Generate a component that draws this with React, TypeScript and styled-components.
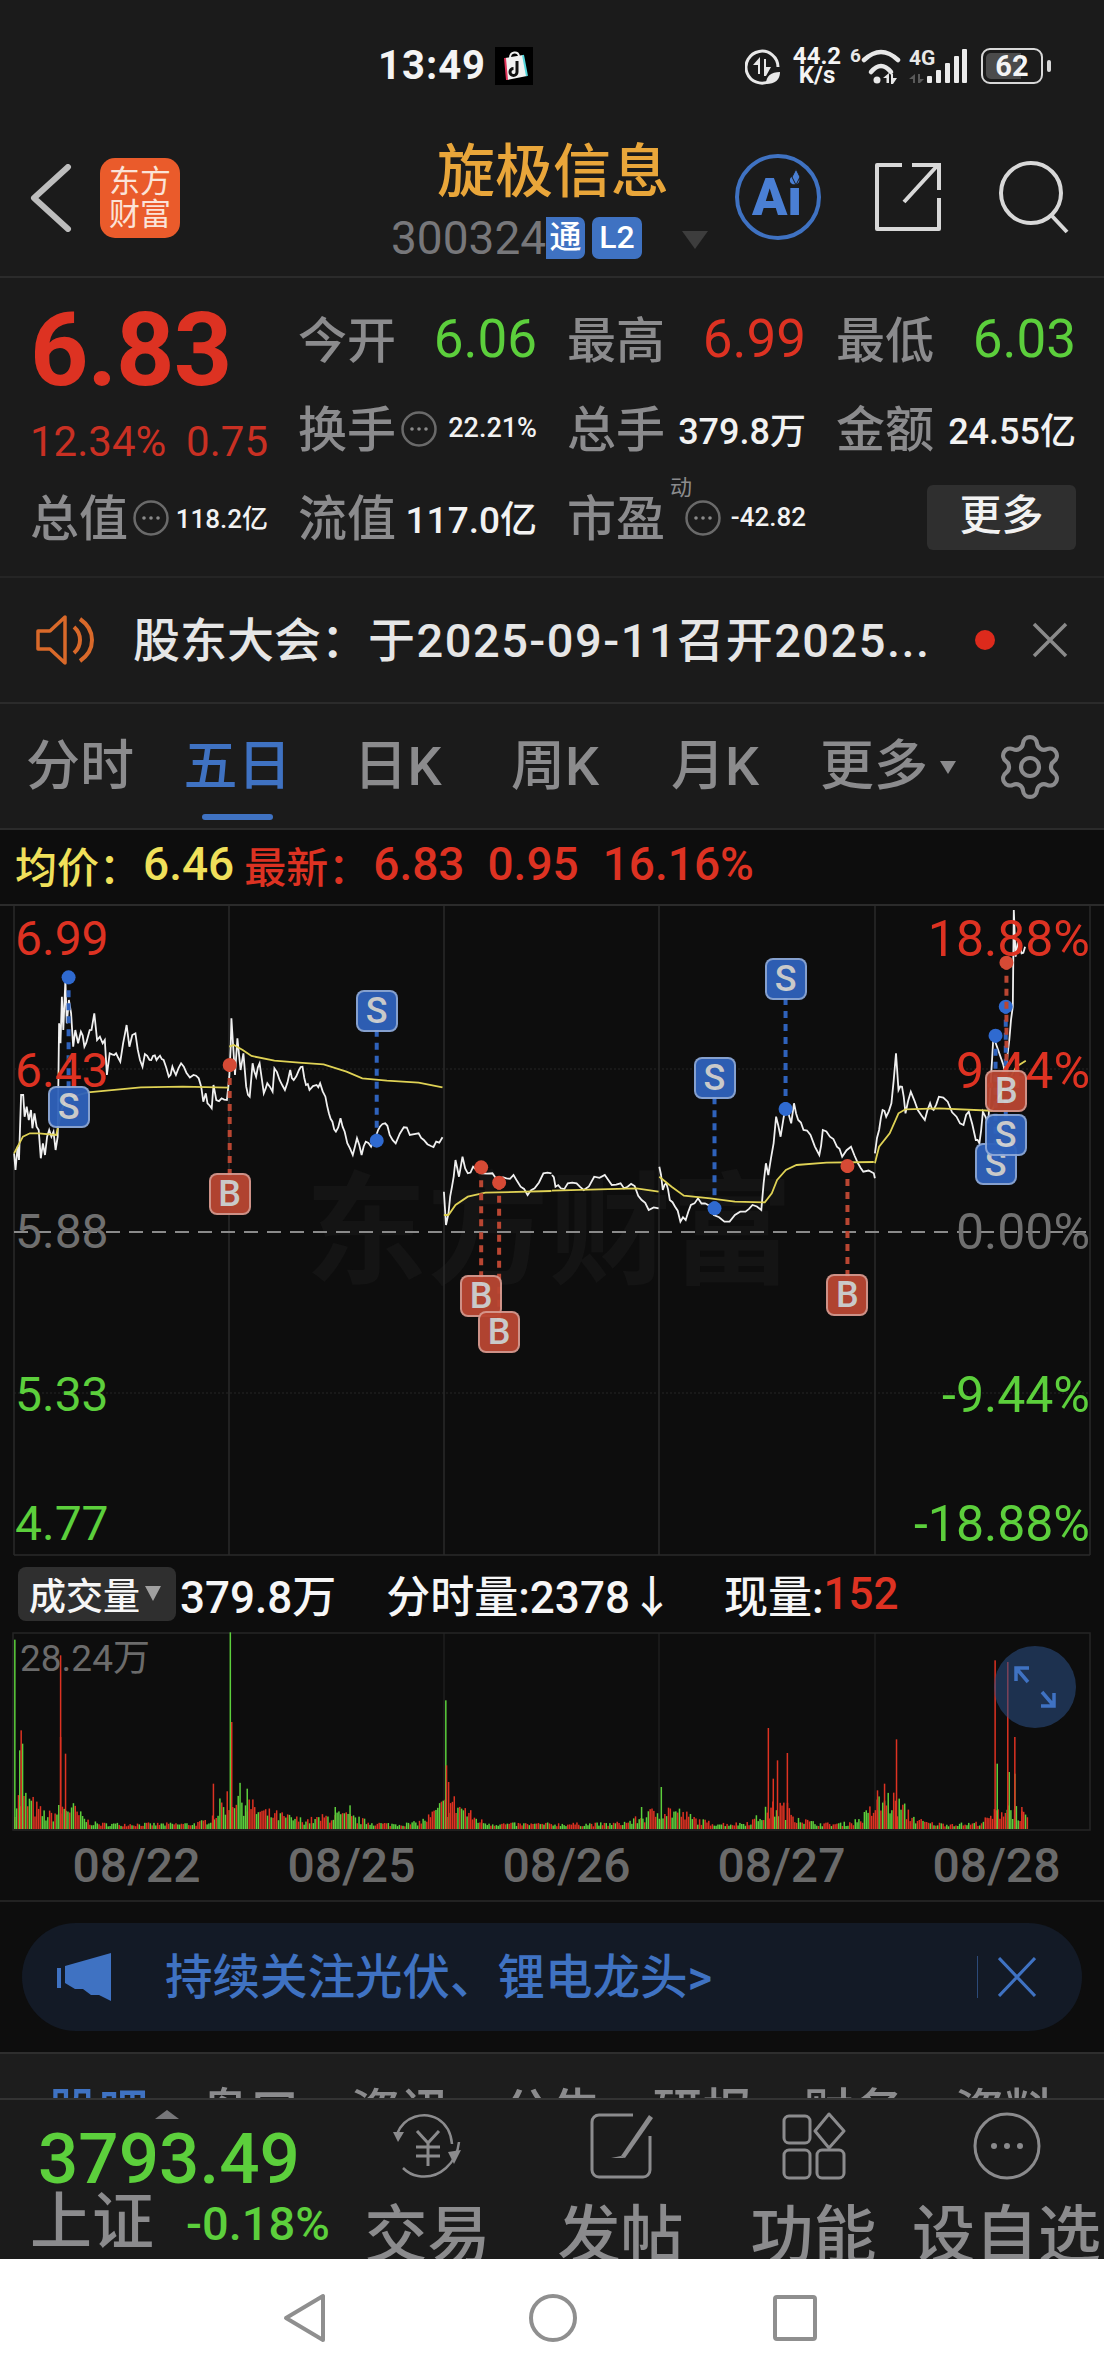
import React from "react";
import styled, { createGlobalStyle } from "styled-components";
import { Settings } from "lucide-react";

const FONT = `Roboto, "Noto Sans CJK SC", sans-serif`;
const RED = "#dd3222";
const GREEN = "#5ccf3c";
const GREY = "#8b8b8d";
const BLUE = "#3f72c2";

const GlobalStyle = createGlobalStyle`
  html, body { margin: 0; padding: 0; background: #1b1b1b; }
  body { font-family: ${FONT}; width: 1104px; }
  * { box-sizing: border-box; }
`;

const Page = styled.div`
  width: 1104px;
  height: 2376px;
  overflow: hidden;
  display: flex;
  flex-direction: column;
  background: #1b1b1b;
  & > * {
    flex: none;
  }
`;

/* status bar */
const StatusBar = styled.div`
  height: 120px;
  padding: 47px 53px 0 378px;
  display: flex;
  align-items: flex-start;
  color: #f4f4f4;
`;
const Clock = styled.div`
  font-size: 40px;
  line-height: 38px;
  font-weight: 700;
  letter-spacing: 1px;
  width: 117px;
`;
const StatusRight = styled.div`
  margin-left: auto;
  display: flex;
  align-items: center;
  height: 38px;
`;
const Speed = styled.div`
  width: 56px;
  margin: 0 5px 0 8px;
  text-align: center;
  font-size: 24px;
  line-height: 19px;
  font-weight: 700;
`;
const Battery = styled.div`
  position: relative;
  width: 62px;
  height: 36px;
  margin-left: 14px;
  margin-right: 8px;
  border: 2px solid #d8d8d8;
  border-radius: 9px;
  padding: 3px;
  &::after {
    content: "";
    position: absolute;
    right: -10px;
    top: 10px;
    width: 4px;
    height: 12px;
    border-radius: 2px;
    background: #d8d8d8;
  }
`;
const BatteryFill = styled.div`
  height: 100%;
  border-radius: 5px;
  background: linear-gradient(to right, #4b4b4b 68%, transparent 68%);
  font-size: 29px;
  line-height: 27px;
  font-weight: 700;
  text-align: center;
`;

/* header */
const Header = styled.div`
  height: 158px;
  padding-left: 30px;
  display: flex;
  align-items: center;
  border-bottom: 2px solid #2b2b2b;
`;
const Logo = styled.div`
  width: 80px;
  height: 80px;
  margin-left: 28px;
  padding-top: 7px;
  border-radius: 15px;
  background: #ea5b2b;
  color: #fbe3d8;
  font-size: 31px;
  line-height: 33px;
  text-align: center;
`;
const TitleBlock = styled.div`
  width: 555px;
  height: 158px;
  padding: 20px 0 0 211px;
  display: flex;
  flex-direction: column;
`;
const Title = styled.div`
  padding-left: 46px;
  font-size: 58px;
  line-height: 66px;
  font-weight: 500;
  color: #e9a63a;
  white-space: nowrap;
`;
const CodeRow = styled.div`
  display: flex;
  align-items: center;
  margin-top: 12px;
  height: 42px;
`;
const Code = styled.span`
  font-size: 46px;
  line-height: 42px;
  color: #77777a;
  width: 155px;
`;
const Tag = styled.span<{ $w: number; $flat?: boolean }>`
  width: ${(p) => p.$w}px;
  height: 42px;
  margin-right: 7px;
  background: ${BLUE};
  border-radius: ${(p) => (p.$flat ? "0 7px 7px 0" : "7px")};
  color: #fff;
  font-size: 32px;
  line-height: 41px;
  font-weight: 500;
  text-align: center;
`;
const Caret = styled.span`
  width: 0;
  height: 0;
  margin-left: 33px;
  margin-top: 4px;
  border-left: 13px solid transparent;
  border-right: 13px solid transparent;
  border-top: 18px solid #3d3d3d;
`;
const HeadIcon = styled.svg<{ $gap: number }>`
  margin-left: ${(p) => p.$gap}px;
  margin-top: -2px;
  flex: none;
`;

/* quote */
const Quote = styled.div`
  height: 300px;
  padding: 17px 28px 0 30px;
  display: grid;
  grid-template-columns: 238px 239px 239px 240px;
  column-gap: 30px;
  grid-auto-rows: 89px;
  border-bottom: 2px solid #252525;
`;
const Last = styled.div`
  font-size: 102px;
  line-height: 106px;
  font-weight: 700;
  letter-spacing: -1px;
  color: ${RED};
  margin-top: 2px;
`;
const Change = styled.div`
  display: flex;
  justify-content: space-between;
  padding-top: 36px;
  font-size: 42px;
  line-height: 44px;
  color: #c93023;
`;
const Stat = styled.div`
  display: flex;
  align-items: center;
  justify-content: space-between;
  white-space: nowrap;
`;
const Label = styled.span`
  position: relative;
  top: -3px;
  font-size: 49px;
  color: ${GREY};
  font-weight: 500;
`;
const Value = styled.span<{ $color?: string; $size?: number }>`
  position: relative;
  top: -1px;
  font-size: ${(p) => p.$size ?? 53}px;
  color: ${(p) => p.$color ?? "#f2f2f2"};
  font-weight: ${(p) => ((p.$size ?? 53) < 53 ? 500 : 400)};
  margin-left: auto;
`;
const Hint = styled.svg<{ $gap?: number }>`
  margin-left: ${(p) => p.$gap ?? 5}px;
  flex: none;
`;
const Super = styled.span`
  position: absolute;
  right: -27px;
  top: -10px;
  font-size: 22px;
  font-weight: 400;
`;
const MoreBtn = styled.div`
  width: 149px;
  height: 65px;
  margin-left: auto;
  margin-top: 12px;
  border-radius: 6px;
  background: #2f2f2f;
  color: #f2f2f2;
  font-size: 42px;
  line-height: 62px;
  font-weight: 500;
  text-align: center;
`;

/* notice */
const Notice = styled.div`
  height: 126px;
  padding: 0 36px;
  display: flex;
  align-items: center;
  border-bottom: 2px solid #2b2b2b;
`;
const NoticeText = styled.div`
  margin-left: 37px;
  width: 842px;
  padding-bottom: 8px;
  font-size: 47px;
  font-weight: 500;
  letter-spacing: 1.5px;
  color: #e6e6e6;
  white-space: nowrap;
`;
const NoticeHead = styled.span`
  letter-spacing: 0;
`;
const Dot = styled.span`
  width: 20px;
  height: 20px;
  border-radius: 50%;
  background: #dd2a1c;
`;
const Close = styled.div`
  margin-left: 37px;
  display: flex;
`;

/* period tabs */
const Tabs = styled.div`
  height: 126px;
  display: grid;
  grid-template-columns: 160px 155px 165px 150px 170px 176px 128px;
  align-items: center;
  border-bottom: 2px solid #2b2b2b;
`;
const Tab = styled.div<{ $active?: boolean }>`
  position: relative;
  display: flex;
  align-items: center;
  justify-content: center;
  font-size: 54px;
  line-height: 126px;
  color: ${(p) => (p.$active ? BLUE : GREY)};
  font-weight: 500;
  &::after {
    content: "";
    display: ${(p) => (p.$active ? "block" : "none")};
    position: absolute;
    left: 42px;
    right: 42px;
    bottom: 10px;
    height: 6px;
    border-radius: 3px;
    background: ${BLUE};
  }
`;
const TabCaret = styled.span`
  width: 0;
  height: 0;
  margin-left: 12px;
  border-left: 8px solid transparent;
  border-right: 8px solid transparent;
  border-top: 13px solid ${GREY};
`;
const GearCell = styled.div`
  padding-right: 20px;
  display: flex;
  justify-content: center;
`;

/* chart */
const ChartArea = styled.div`
  background: #0d0d0d;
  height: 1222px;
  display: flex;
  flex-direction: column;
  & > * {
    flex: none;
  }
`;
const InfoRow = styled.div`
  height: 60px;
  padding: 8px 0 0 15px;
  display: flex;
  align-items: center;
  white-space: nowrap;
`;
const InfoItem = styled.span<{ $color: string; $gap: number; $cjk?: boolean }>`
  color: ${(p) => p.$color};
  margin-right: ${(p) => p.$gap}px;
  font-size: ${(p) => (p.$cjk ? 42 : 46)}px;
  font-weight: 500;
`;
const Chart = styled.div`
  position: relative;
  height: 670px;
`;
const ChartSvg = styled.svg`
  position: absolute;
  left: 0;
  top: 0;
`;
const Watermark = styled.div`
  position: absolute;
  left: 305px;
  top: 268px;
  font-size: 122px;
  line-height: 150px;
  font-weight: 700;
  color: #141414;
  white-space: nowrap;
`;
const Axis = styled.div<{ $top: number; $color: string; $right?: boolean }>`
  position: absolute;
  top: ${(p) => p.$top}px;
  ${(p) => (p.$right ? "right: 14px;" : "left: 15px;")}
  font-size: ${(p) => (p.$right ? 50 : 48)}px;
  line-height: 50px;
  color: ${(p) => p.$color};
`;
const Badge = styled.div<{ $x: number; $y: number; $kind: "S" | "B" }>`
  position: absolute;
  left: ${(p) => p.$x - 21}px;
  top: ${(p) => p.$y - 21}px;
  width: 42px;
  height: 42px;
  border-radius: 8px;
  border: 2px solid rgba(255, 255, 255, 0.45);
  background: ${(p) => (p.$kind === "S" ? "#2f62bb" : "#b94632")};
  opacity: 0.95;
  color: #d4d4d4;
  font-size: 36px;
  line-height: 38px;
  font-weight: 500;
  text-align: center;
`;

/* volume */
const VolHeader = styled.div`
  height: 72px;
  padding: 0 0 5px 18px;
  display: flex;
  align-items: center;
  font-size: 44px;
  font-weight: 500;
  color: #f6f6f6;
  white-space: nowrap;
`;
const VolPill = styled.div`
  width: 158px;
  height: 54px;
  margin-right: 4px;
  padding-left: 11px;
  display: flex;
  align-items: center;
  border-radius: 8px;
  background: #2f2f2f;
  font-size: 37px;
`;
const PillCaret = styled.span`
  width: 0;
  height: 0;
  margin-left: 5px;
  border-left: 8px solid transparent;
  border-right: 8px solid transparent;
  border-top: 15px solid #a0a0a0;
`;
const VolItem = styled.span<{ $gap?: number; $color?: string }>`
  margin-left: ${(p) => p.$gap ?? 0}px;
  color: ${(p) => p.$color ?? "inherit"};
`;
const VolChart = styled.div`
  position: relative;
  height: 199px;
`;
const VolMax = styled.div`
  position: absolute;
  left: 20px;
  top: 7px;
  font-size: 37px;
  line-height: 40px;
  color: #6b6b6b;
`;
const Expand = styled.div`
  position: absolute;
  left: 994px;
  top: 14px;
  width: 82px;
  height: 82px;
  border-radius: 50%;
  background: rgba(44, 80, 135, 0.55);
  display: flex;
  align-items: center;
  justify-content: center;
`;
const Dates = styled.div`
  height: 71px;
  padding-left: 29px;
  display: grid;
  grid-template-columns: repeat(5, 215px);
  align-items: center;
  border-bottom: 2px solid #222;
  font-size: 48px;
  font-weight: 500;
  color: #6a6a6a;
  text-align: center;
`;
const BannerWrap = styled.div`
  height: 150px;
  padding: 21px 22px 0;
`;
const Banner = styled.div`
  height: 108px;
  padding: 0 46px 0 35px;
  display: flex;
  align-items: center;
  border-radius: 54px;
  background: #131a26;
  color: ${BLUE};
  font-size: 47.5px;
  font-weight: 500;
`;
const BannerText = styled.div`
  margin-left: 53px;
  padding-bottom: 8px;
  flex: 1;
  white-space: nowrap;
`;
const BannerClose = styled.div`
  height: 42px;
  padding-left: 20px;
  display: flex;
  align-items: center;
  border-left: 1px solid #2c4a78;
`;

/* page tabs cut by the bottom nav */
const Peek = styled.div`
  height: 46px;
  overflow: hidden;
  background: #1d1d1d;
  border-top: 2px solid #2e2e2e;
  display: grid;
  grid-template-columns: repeat(7, 151px);
  padding: 0 0 0 23px;
`;
const PeekTab = styled.div<{ $active?: boolean }>`
  padding-top: 29px;
  text-align: center;
  font-size: 50px;
  line-height: 60px;
  font-weight: 500;
  color: ${(p) => (p.$active ? BLUE : GREY)};
`;

/* bottom nav */
const Nav = styled.div`
  height: 161px;
  overflow: hidden;
  display: grid;
  grid-template-columns: 331px repeat(4, 193px);
  background: #1b1b1b;
  border-top: 2px solid #333;
`;
const IndexCell = styled.div`
  position: relative;
  padding: 25px 0 0 38px;
`;
const UpMark = styled.span`
  position: absolute;
  left: 155px;
  top: 10px;
  width: 0;
  height: 0;
  border-left: 12px solid transparent;
  border-right: 12px solid transparent;
  border-bottom: 9px solid #77777a;
`;
const IndexValue = styled.div`
  font-size: 71px;
  line-height: 68px;
  font-weight: 500;
  color: ${GREEN};
`;
const IndexRow = styled.div`
  margin: -4px 0 0 -8px;
  display: flex;
  align-items: center;
  white-space: nowrap;
`;
const IndexName = styled.span`
  font-size: 62px;
  line-height: 68px;
  font-weight: 500;
  color: ${GREY};
`;
const IndexPct = styled.span`
  margin-left: 32px;
  font-size: 47px;
  font-weight: 500;
  color: ${GREEN};
`;
const NavItem = styled.div`
  padding-top: 12px;
  display: flex;
  flex-direction: column;
  align-items: center;
  white-space: nowrap;
`;
const NavLabel = styled.div`
  margin-top: 22px;
  font-size: 63px;
  line-height: 68px;
  font-weight: 500;
  color: ${GREY};
`;
const SysBar = styled.div`
  height: 117px;
  padding-left: 283px;
  display: flex;
  align-items: center;
  background: #fff;
`;
const SysBtn = styled.div<{ $w: number }>`
  width: ${(p) => p.$w}px;
  display: flex;
`;

/* --- chart data, traced from the picture in 3x crop coordinates --- */
const lineA =
  "40,790 44,840 50,770 54,810 60,615 66,615 70,680 76,650 82,690 88,660 92,715 98,670 104,710 110,720 116,805 122,760 128,795 134,740 140,720 146,740 152,725 158,780 164,740 168,400 172,460 176,320 180,420 186,270 190,400 196,330 202,370 208,470 214,420 222,460 230,425 240,470 250,440 260,420 268,370 276,450 284,440 292,460 298,450 304,555 312,490 325,495 330,490 342,515 350,460 360,405 368,470 376,435 385,430 398,510 405,530 412,492 425,510 435,498 445,510 455,497 465,510 480,560 490,530 500,555 515,520 530,548 550,555 565,565 572,590 578,635 585,610 590,640 602,655 607,585 615,630 630,625 645,630 652,560 656,470 658,385 663,470 668,555 675,445 684,540 692,490 700,590 710,620 718,520 728,560 738,520 750,610 760,580 775,605 780,535 795,570 810,600 825,540 835,570 850,540 860,530 870,585 880,600 900,585 910,580 925,620 935,670 945,695 955,725 968,685 980,725 995,775 1003,795 1015,745 1028,795 1040,755 1055,770 1070,735 1080,710 1095,700 1108,735 1125,760 1148,712 1165,735 1190,730 1205,750 1225,768 1240,755 1258,742";
const lineB =
  "1262,905 1268,1005 1275,970 1285,890 1295,810 1305,860 1315,800 1330,850 1345,830 1370,850 1400,850 1420,875 1440,865 1460,855 1480,890 1500,915 1520,895 1545,850 1568,850";
const lineC =
  "0,855 10,890 25,895 45,880 70,880 90,900 120,860 150,855 170,885 195,880 215,890 235,888 255,930 275,960 303,955";
const lineD =
  "305,830 315,900 325,880 335,930 350,950 365,995 380,990 395,945 415,925 435,940 460,975 490,995 520,975 550,965 570,945 595,960 608,820 615,855 630,760 637,680 650,740 665,645 680,700 688,640 700,690 715,720 735,735 760,795 770,720 790,740 810,770 825,800 850,770 870,820 885,845 915,850 918,865";
const lineE =
  "918,790 930,720 940,660 950,680 965,640 978,490 985,600 995,590 1005,670 1020,605 1040,660 1060,690 1075,640 1085,660 1100,620 1125,635 1150,680 1170,705 1185,665 1205,750 1215,760 1225,665 1240,700 1255,440 1275,500 1290,555 1300,450 1310,350 1313,60 1318,200 1325,150 1335,190 1345,170";

const avgLeft = [
  "40,790 50,770 65,740 85,730 110,730 160,735 175,660 190,625 250,607 400,592 520,590 650,593",
  "652,470 665,465 690,480 715,498 780,512 850,518 920,523 985,545 1030,565 1100,572 1190,578 1258,592",
  "1262,975 1275,975 1295,945 1330,920 1380,908 1568,903",
];
const avgRight = [
  "0,902 240,895 303,905",
  "305,860 340,890 375,917 450,925 520,935 605,937 625,910 640,870 665,840 695,825 780,818 915,816",
  "918,820 930,770 960,730 985,670 1005,658 1100,655 1250,662 1270,620 1300,570 1320,530 1347,512",
];

const leftX = (x: number) => x / 2.843;
const rightX = (x: number) => 552 + x / 2.843;
const toPoints = (raw: string, fx: (x: number) => number) =>
  raw
    .split(" ")
    .map((p) => {
      const [x, y] = p.split(",").map(Number);
      return `${fx(x).toFixed(1)},${(y / 3).toFixed(1)}`;
    })
    .join(" ");

// price line: the traced points plus a little tick noise between them
const toJagged = (raw: string, fx: (x: number) => number) => {
  let tick = 11 + raw.length;
  const tickRand = () => {
    tick = (tick * 16807) % 2147483647;
    return tick / 2147483647;
  };
  const pts = raw.split(" ").map((p) => p.split(",").map(Number));
  const out: string[] = [];
  pts.forEach(([x, y], i) => {
    out.push(`${fx(x).toFixed(1)},${(y / 3).toFixed(1)}`);
    const next = pts[i + 1];
    if (next && next[0] - x > 9) {
      const mx = (x + next[0]) / 2;
      const my = (y + next[1]) / 2 + (tickRand() - 0.5) * 22;
      out.push(`${fx(mx).toFixed(1)},${(my / 3).toFixed(1)}`);
    }
  });
  return out.join(" ");
};

type Trade = { kind: "S" | "B"; x: number; dot: number; badge: number };
const trades: Trade[] = [
  { kind: "S", x: leftX(195), dot: 262 / 3, badge: 650 / 3 },
  { kind: "B", x: leftX(653), dot: 525 / 3, badge: 913 / 3 },
  { kind: "S", x: leftX(1071), dot: 752 / 3, badge: 363 / 3 },
  { kind: "B", x: leftX(1368), dot: 832 / 3, badge: 1218 / 3 },
  { kind: "B", x: leftX(1419), dot: 878 / 3, badge: 1327 / 3 },
  { kind: "S", x: rightX(462), dot: 955 / 3, badge: 565 / 3 },
  { kind: "S", x: rightX(664), dot: 657 / 3, badge: 268 / 3 },
  { kind: "B", x: rightX(840), dot: 828 / 3, badge: 1215 / 3 },
  { kind: "S", x: rightX(1261), dot: 437 / 3, badge: 823 / 3 },
  { kind: "S", x: rightX(1290), dot: 350 / 3, badge: 735 / 3 },
  { kind: "B", x: rightX(1292), dot: 218 / 3, badge: 603 / 3 },
];

const axisLeft = [
  { text: "6.99", top: 24, color: RED },
  { text: "6.43", top: 156, color: RED },
  { text: "5.88", top: 317, color: "#6f6f6f" },
  { text: "5.33", top: 480, color: GREEN },
  { text: "4.77", top: 609, color: GREEN },
];
const axisRight = [
  { text: "18.88%", top: 24, color: RED },
  { text: "9.44%", top: 156, color: RED },
  { text: "0.00%", top: 317, color: "#6f6f6f" },
  { text: "-9.44%", top: 480, color: GREEN },
  { text: "-18.88%", top: 609, color: GREEN },
];

/* volume bars: a noisy floor with bumps, and the tall spikes read from the crop */
const VOL_H = 197;
const spikes: [number, number, string][] = [
  [20, 238, GREEN], [27, 570, GREEN], [31, 550, GREEN], [326, 216, GREEN], [632, 420, GREEN],
  [938, 680, GREEN], [1415, 610, GREEN], [1432, 635, GREEN], [1440, 640, GREEN], [910, 740, GREEN],
  [496, 735, GREEN], [475, 740, GREEN], [350, 685, GREEN],
  [29, 510, RED], [85, 285, RED], [85, 530, RED], [92, 580, RED], [302, 670, RED], [328, 485, RED],
  [633, 615, RED], [636, 665, RED], [1090, 503, RED], [1097, 655, RED], [1103, 600, RED],
  [1117, 578, RED], [1245, 690, RED], [1255, 670, RED], [1272, 537, RED], [1412, 300, RED],
  [1430, 305, RED], [1440, 530, RED], [1450, 740, RED],
];
const bumps: [number, number, number][] = [
  [30, 30, 90], [95, 22, 60], [330, 26, 90], [375, 50, 35], [480, 35, 30], [640, 30, 75],
  [945, 40, 50], [1105, 30, 60], [1260, 32, 85], [1430, 26, 60],
];
const volBars = (() => {
  const bars: { x: number; h: number; color: string }[] = [];
  let seed = 7;
  const rand = () => {
    seed = (seed * 16807) % 2147483647;
    return seed / 2147483647;
  };
  for (let zx = 20; zx < 1460; zx += 2.6) {
    let env = 14;
    bumps.forEach(([c, w, a]) => {
      const d = (zx - c) / w;
      env += a * Math.exp(-d * d);
    });
    const h = (env * (0.35 + rand() * 0.85)) / 3 + 1;
    bars.push({ x: zx / 1.42, h, color: rand() > 0.5 ? RED : GREEN });
  }
  spikes.forEach(([zx, top, color]) => {
    bars.push({ x: zx / 1.42, h: (806 - top) / 3, color });
  });
  return bars;
})();

const MoreDots = ({ gap }: { gap?: number }) => (
  <Hint $gap={gap} width="36" height="36" viewBox="0 0 36 36" fill="none">
    <circle cx="18" cy="18" r="16.5" stroke="#6a6a6a" strokeWidth="2.5" />
    <circle cx="11" cy="18" r="1.8" fill="#8a8a8a" />
    <circle cx="18" cy="18" r="1.8" fill="#8a8a8a" />
    <circle cx="25" cy="18" r="1.8" fill="#8a8a8a" />
  </Hint>
);

const App = () => (
  <Page>
    <GlobalStyle />
    <StatusBar>
      <Clock>13:49</Clock>
      <svg width="38" height="38" viewBox="0 0 38 38">
        <rect width="38" height="38" fill="#000" />
        <path d="M10 11 L28 8 L32 29 L12 33 Z" fill="#f2f2f2" />
        <path d="M15 11 C15 4 23 4 24 9" fill="none" stroke="#f2f2f2" strokeWidth="2" />
        <path d="M22 14 v11 a3.5 3.5 0 1 1 -3.5 -3.5" fill="none" stroke="#111" strokeWidth="3" />
        <path d="M10 11 L12 33" stroke="#e0335a" strokeWidth="2" />
        <path d="M28 8 L32 29" stroke="#54d6dc" strokeWidth="2" />
      </svg>
      <StatusRight>
        <svg width="36" height="38" viewBox="0 0 36 38" fill="none">
          <path d="M25 34 A16 16 0 1 1 33 20" stroke="#e8e8e8" strokeWidth="3" />
          <path d="M15 10 V27 H13 V18 H8 Z M19 12 V29 H21 L26 20 H21 V12 Z" fill="#e8e8e8" />
          <path d="M21 37 C21 29 26 25 35 25 C35 33 30 37 21 37 Z" fill="#e8e8e8" />
        </svg>
        <Speed>
          44.2
          <br />
          K/s
        </Speed>
        <svg width="117" height="38" viewBox="0 0 117 38" fill="none">
          <text x="0" y="15" fontSize="19" fontWeight="700" fill="#e8e8e8" fontFamily="Roboto">6</text>
          <g stroke="#e8e8e8" strokeWidth="4.5" strokeLinecap="round">
            <path d="M14 13 Q31 -3 48 13" />
            <path d="M21 25 Q31 13 41 25" />
          </g>
          <circle cx="27" cy="33" r="3.5" fill="#e8e8e8" />
          <path d="M39 26 V36 H36.5 V31 H33 Z M41 27 V37 H43 L47 31 H43 V27 Z" fill="#e8e8e8" />
          <text x="59" y="18" fontSize="21" fontWeight="700" fill="#e8e8e8" fontFamily="Roboto">4G</text>
          <path d="M65 27 V36 H63 V32 H59 Z M68 27 V36 H70 L74 32 H70 V27 Z" fill="#5a5a5a" />
          <g fill="#ececec">
            <rect x="77" y="29" width="5" height="7" rx="1" />
            <rect x="86" y="23" width="5" height="13" rx="1" />
            <rect x="95" y="16" width="5" height="20" rx="1" />
            <rect x="104" y="9" width="5" height="27" rx="1" />
            <rect x="112" y="2" width="5" height="34" rx="1" />
          </g>
        </svg>
        <Battery>
          <BatteryFill>62</BatteryFill>
        </Battery>
      </StatusRight>
    </StatusBar>

    <Header>
      <svg width="42" height="68" viewBox="0 0 42 68" fill="none">
        <path d="M38 3 L4 34 L38 65" stroke="#bdbdbd" strokeWidth="6" strokeLinecap="round" strokeLinejoin="round" />
      </svg>
      <Logo>
        东方
        <br />
        财富
      </Logo>
      <TitleBlock>
        <Title>旋极信息</Title>
        <CodeRow>
          <Code>300324</Code>
          <Tag $w={39} $flat>通</Tag>
          <Tag $w={50}>L2</Tag>
          <Caret />
        </CodeRow>
      </TitleBlock>
      <HeadIcon $gap={0} width="86" height="86" viewBox="0 0 86 86" fill="none">
        <circle cx="43" cy="43" r="41" stroke="#3f72c2" strokeWidth="4" />
        <text x="17" y="61" fontSize="52" fontWeight="900" fill="#4a7fd4" fontFamily="Roboto">Ai</text>
        <path d="M61 15 L65 23 L61 31 L57 23 Z" fill="#4a7fd4" stroke="#1b1b1b" strokeWidth="1" />
      </HeadIcon>
      <HeadIcon $gap={53} width="68" height="70" viewBox="0 0 68 70" fill="none" stroke="#d8d8d8" strokeWidth="4">
        <path d="M28 3 H3 V67 H65 V36" strokeLinejoin="round" />
        <path d="M30 40 L63 4 M38 3 H65 V28" />
      </HeadIcon>
      <HeadIcon $gap={56} width="72" height="74" viewBox="0 0 72 74" fill="none" stroke="#d8d8d8" strokeWidth="4">
        <circle cx="33" cy="33" r="30" />
        <path d="M54 56 L69 72" />
      </HeadIcon>
    </Header>

    <Quote>
      <Last>6.83</Last>
      <Stat>
        <Label>今开</Label>
        <Value $color={GREEN}>6.06</Value>
      </Stat>
      <Stat>
        <Label>最高</Label>
        <Value $color={RED}>6.99</Value>
      </Stat>
      <Stat>
        <Label>最低</Label>
        <Value $color={GREEN}>6.03</Value>
      </Stat>
      <Change>
        <span>12.34%</span>
        <span>0.75</span>
      </Change>
      <Stat>
        <Label>换手</Label>
        <MoreDots />
        <Value $size={27}>22.21%</Value>
      </Stat>
      <Stat>
        <Label>总手</Label>
        <Value $size={36}>379.8万</Value>
      </Stat>
      <Stat>
        <Label>金额</Label>
        <Value $size={36}>24.55亿</Value>
      </Stat>
      <Stat>
        <Label>总值</Label>
        <MoreDots />
        <Value $size={26}>118.2亿</Value>
      </Stat>
      <Stat>
        <Label>流值</Label>
        <Value $size={37}>117.0亿</Value>
      </Stat>
      <Stat>
        <Label>
          市盈<Super>动</Super>
        </Label>
        <MoreDots gap={20} />
        <Value $size={26}>-42.82</Value>
      </Stat>
      <MoreBtn>更多</MoreBtn>
    </Quote>

    <Notice>
      <svg width="60" height="52" viewBox="0 0 60 52" fill="none" stroke="#d9692a" strokeWidth="3.5" strokeLinejoin="round">
        <path d="M2 17 H14 L29 3 V49 L14 35 H2 Z" />
        <path d="M38 13 C46 20 46 32 38 39" strokeWidth="4" />
        <path d="M44 5 C60 16 60 36 44 47" strokeWidth="4" />
      </svg>
      <NoticeText>
        <NoticeHead>股东大会：</NoticeHead>于2025-09-11召开2025...
      </NoticeText>
      <Dot />
      <Close>
        <svg width="36" height="36" viewBox="0 0 36 36" stroke="#8a8a8a" strokeWidth="3.5">
          <path d="M2 2 L34 34 M34 2 L2 34" />
        </svg>
      </Close>
    </Notice>

    <Tabs>
      <Tab>分时</Tab>
      <Tab $active>五日</Tab>
      <Tab>日K</Tab>
      <Tab>周K</Tab>
      <Tab>月K</Tab>
      <Tab>
        更多
        <TabCaret />
      </Tab>
      <GearCell>
        <Settings size={72} color={GREY} strokeWidth={1.4} />
      </GearCell>
    </Tabs>

    <ChartArea>
      <InfoRow>
        <InfoItem $cjk $color="#f0e05a" $gap={2}>均价：</InfoItem>
        <InfoItem $color="#f0e05a" $gap={10}>6.46</InfoItem>
        <InfoItem $cjk $color={RED} $gap={3}>最新：</InfoItem>
        <InfoItem $color={RED} $gap={23}>6.83</InfoItem>
        <InfoItem $color={RED} $gap={24}>0.95</InfoItem>
        <InfoItem $color={RED} $gap={0}>16.16%</InfoItem>
      </InfoRow>
      <Chart>
        <Watermark>东方财富</Watermark>
        <ChartSvg width="1104" height="670" viewBox="0 0 1104 670" fill="none">
          <path d="M0 15 H1104" stroke="#2b2b2b" strokeWidth="2" />
          {[14, 229, 444, 659, 875, 1090].map((x) => (
            <path key={x} d={`M${x} 16 V665`} stroke="#2a2a2a" strokeWidth="1.5" />
          ))}
          <path d="M14 665 H1090" stroke="#2a2a2a" strokeWidth="1.5" />
          <path d="M14 179 H1090 M14 503 H1090" stroke="#262626" strokeWidth="1" strokeDasharray="2 2" />
          <path d="M14 342 H1090" stroke="#8a8a8a" strokeWidth="2" strokeDasharray="14 9" />
          {[lineA, lineB].map((l) => (
            <polyline key={l} points={toJagged(l, leftX)} stroke="#f0f0f0" strokeWidth="1.8" />
          ))}
          {[lineC, lineD, lineE].map((l) => (
            <polyline key={l} points={toJagged(l, rightX)} stroke="#f0f0f0" strokeWidth="1.8" />
          ))}
          {avgLeft.map((l) => (
            <polyline key={l} points={toPoints(l, leftX)} stroke="#dfd255" strokeWidth="1.8" />
          ))}
          {avgRight.map((l) => (
            <polyline key={l} points={toPoints(l, rightX)} stroke="#dfd255" strokeWidth="1.8" />
          ))}
          {trades.map((t) => {
            const c = t.kind === "S" ? "#2f62bb" : "#b94632";
            return (
              <g key={t.x}>
                <path d={`M${t.x} ${t.dot} V${t.badge}`} stroke={c} strokeWidth="4" strokeDasharray="7 6" />
                <circle cx={t.x} cy={t.dot} r="7" fill={t.kind === "S" ? "#2f6ad0" : "#d64a35"} />
              </g>
            );
          })}
        </ChartSvg>
        {axisLeft.map((a) => (
          <Axis key={a.text} $top={a.top} $color={a.color}>{a.text}</Axis>
        ))}
        {axisRight.map((a) => (
          <Axis key={a.text} $top={a.top} $color={a.color} $right>{a.text}</Axis>
        ))}
        {trades.map((t) => (
          <Badge key={t.x} $x={t.x} $y={t.badge} $kind={t.kind}>{t.kind}</Badge>
        ))}
      </Chart>

      <VolHeader>
        <VolPill>
          成交量
          <PillCaret />
        </VolPill>
        <VolItem>379.8万</VolItem>
        <VolItem $gap={50}>分时量:2378↓</VolItem>
        <VolItem $gap={50}>现量:</VolItem>
        <VolItem $color={RED}>152</VolItem>
      </VolHeader>
      <VolChart>
        <ChartSvg width="1104" height="199" viewBox="0 0 1104 199" fill="none">
          <path d="M13 1 H1090 V198 H13 Z" stroke="#262626" strokeWidth="1.5" />
          {[444, 659, 875].map((x) => (
            <path key={x} d={`M${x} 1 V198`} stroke="#262626" strokeWidth="1" />
          ))}
          {volBars.map((b, i) => (
            <rect key={i} x={b.x} y={VOL_H - b.h} width="1.5" height={b.h} fill={b.color} />
          ))}
        </ChartSvg>
        <VolMax>28.24万</VolMax>
        <Expand>
          <svg width="44" height="44" viewBox="0 0 44 44" fill="none" stroke={BLUE} strokeWidth="3.5">
            <path d="M3 16 V3 H16 M3 3 L15 17 M41 28 V41 H28 M41 41 L29 27" />
          </svg>
        </Expand>
      </VolChart>
      <Dates>
        <span>08/22</span>
        <span>08/25</span>
        <span>08/26</span>
        <span>08/27</span>
        <span>08/28</span>
      </Dates>
      <BannerWrap>
        <Banner>
          <svg width="55" height="48" viewBox="0 0 55 48" fill={BLUE}>
            <rect x="0" y="15" width="4" height="20" />
            <path d="M8 13 L54 0 V48 L42 42 L34 42 L26 36 L18 36 L8 30 Z" />
          </svg>
          <BannerText>持续关注光伏、锂电龙头&gt;</BannerText>
          <BannerClose>
            <svg width="38" height="40" viewBox="0 0 38 40" stroke={BLUE} strokeWidth="3">
              <path d="M1 1 L37 39 M37 1 L1 39" />
            </svg>
          </BannerClose>
        </Banner>
      </BannerWrap>
    </ChartArea>

    <Peek>
      <PeekTab $active>股吧</PeekTab>
      <PeekTab>盘口</PeekTab>
      <PeekTab>资讯</PeekTab>
      <PeekTab>公告</PeekTab>
      <PeekTab>研报</PeekTab>
      <PeekTab>财务</PeekTab>
      <PeekTab>资料</PeekTab>
    </Peek>

    <Nav>
      <IndexCell>
        <UpMark />
        <IndexValue>3793.49</IndexValue>
        <IndexRow>
          <IndexName>上证</IndexName>
          <IndexPct>-0.18%</IndexPct>
        </IndexRow>
      </IndexCell>
      <NavItem>
        <svg width="76" height="68" viewBox="0 0 76 68" fill="none" stroke={GREY} strokeWidth="2.5">
          <path d="M7 22 C14 4 34 -1 48 7 C56 12 61 20 62 32" />
          <path d="M69 30 C67 50 50 68 28 64 C22 63 17 60 13 56" />
          <path d="M3 20 L8 30 L14 20 Z" fill={GREY} stroke="none" />
          <path d="M58 40 L71 38 L64 52 Z" fill={GREY} stroke="none" />
          <path d="M27 19 L38 31 L49 19 M26 35 H50 M26 44 H50 M38 31 V54" strokeWidth="3" />
        </svg>
        <NavLabel>交易</NavLabel>
      </NavItem>
      <NavItem>
        <svg width="68" height="68" viewBox="0 0 68 68" fill="none" stroke={GREY} strokeWidth="3">
          <path d="M46 3 H12 A7 7 0 0 0 5 10 V58 A7 7 0 0 0 12 65 H56 A7 7 0 0 0 63 58 V24" />
          <path d="M62 3 L66 6 L38 46 L34 44 Z" fill={GREY} stroke="none" />
          <path d="M34 44 L24 46 L38 46" fill={GREY} stroke="none" />
        </svg>
        <NavLabel>发帖</NavLabel>
      </NavItem>
      <NavItem>
        <svg width="64" height="68" viewBox="0 0 64 68" fill="none" stroke={GREY} strokeWidth="3">
          <rect x="2" y="4" width="26" height="27" rx="5" />
          <path d="M47 2 L62 19 L47 36 L33 19 Z" strokeLinejoin="round" />
          <rect x="2" y="38" width="26" height="28" rx="5" />
          <rect x="35" y="38" width="27" height="28" rx="5" />
        </svg>
        <NavLabel>功能</NavLabel>
      </NavItem>
      <NavItem>
        <svg width="68" height="68" viewBox="0 0 68 68" fill="none" stroke={GREY} strokeWidth="3">
          <circle cx="34" cy="34" r="32" />
          <circle cx="21" cy="34" r="3" fill={GREY} stroke="none" />
          <circle cx="34" cy="34" r="3" fill={GREY} stroke="none" />
          <circle cx="47" cy="34" r="3" fill={GREY} stroke="none" />
        </svg>
        <NavLabel>设自选</NavLabel>
      </NavItem>
    </Nav>

    <SysBar>
      <SysBtn $w={245}>
        <svg width="44" height="50" viewBox="0 0 44 50" fill="none" stroke="#8f8f8f" strokeWidth="4" strokeLinejoin="round">
          <path d="M40 3 V47 L3 25 Z" />
        </svg>
      </SysBtn>
      <SysBtn $w={245}>
        <svg width="50" height="50" viewBox="0 0 50 50" fill="none" stroke="#8f8f8f" strokeWidth="4">
          <circle cx="25" cy="25" r="22" />
        </svg>
      </SysBtn>
      <SysBtn $w={44}>
        <svg width="44" height="46" viewBox="0 0 44 46" fill="none" stroke="#8f8f8f" strokeWidth="4">
          <rect x="2" y="2" width="40" height="42" rx="2" />
        </svg>
      </SysBtn>
    </SysBar>
  </Page>
);

export default App;
